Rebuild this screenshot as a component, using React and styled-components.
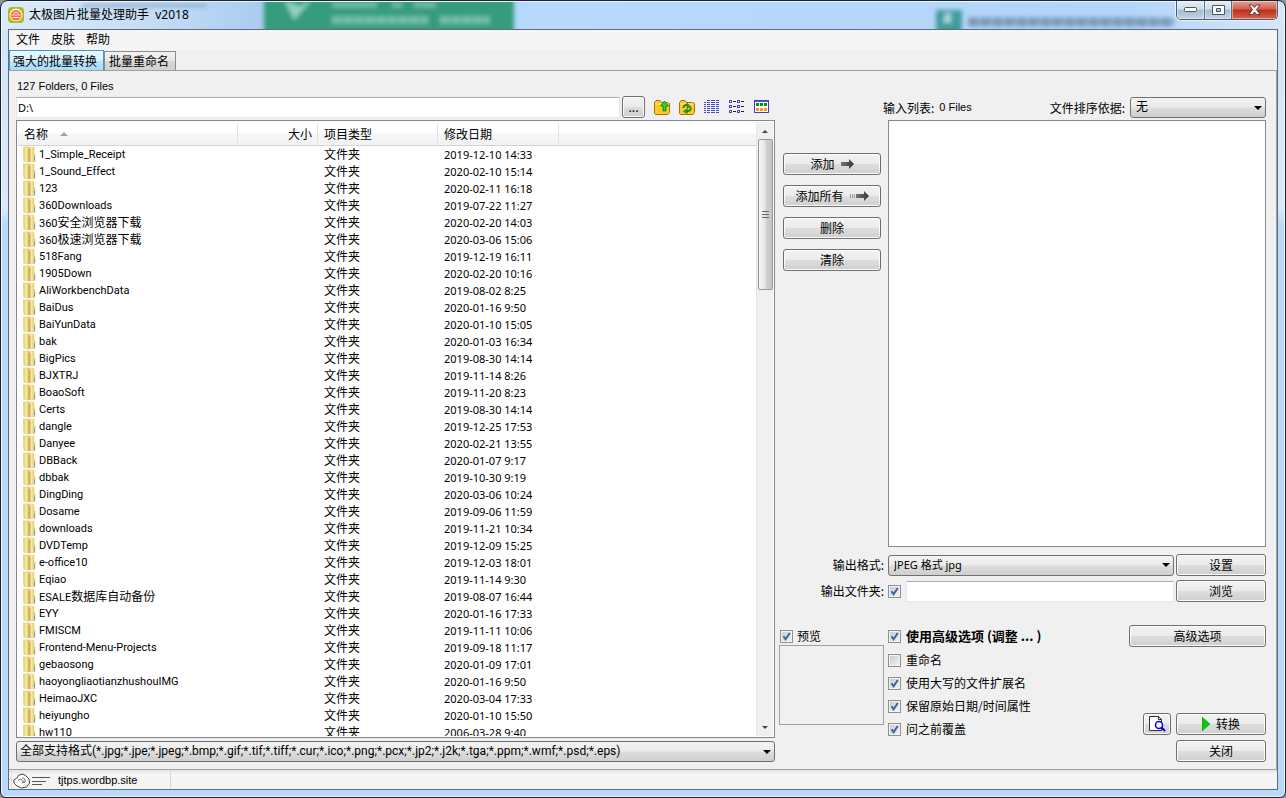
import React from "react";
import styled, { createGlobalStyle, css } from "styled-components";

const LATIN = '"Noto Sans", "Noto Sans CJK SC", sans-serif';
const NARROW = 'Roboto, "Noto Sans CJK SC", sans-serif';
const ARIAL = '"Liberation Sans", "Noto Sans CJK SC", sans-serif';
const HAN = '"Noto Sans CJK SC", sans-serif';

const GlobalStyle = createGlobalStyle`
  * { box-sizing: border-box; }
  body { margin: 0; background: #8d9297; color: #000; }
  button, input, select { margin: 0; color: inherit; }
`;

const Frame = styled.div`
  position: relative;
  display: flex;
  flex-direction: column;
  height: 100vh;
  min-height: 560px;
  padding: 0 7px 7px;
  overflow: hidden;
  background: linear-gradient(#cfe3f7, #dbeafa 26%, #b9d9fb 28%, #b9d9fb);
  border: 1px solid #1b2230;
  border-radius: 8px 8px 6px 6px;
  box-shadow: inset 0 0 0 1px #eef7ff;
`;

const Glass = styled.svg`
  position: absolute;
  inset: 1px;
  width: calc(100% - 2px);
  height: 28px;
`;

const TitleBar = styled.header`
  position: relative;
  display: flex;
  align-items: flex-start;
  height: 28px;
  flex: none;
`;

const Title = styled.h1`
  display: flex;
  align-items: center;
  gap: 5px;
  flex: 1;
  height: 28px;
  margin: 0;
  font: 400 12px/16px ${LATIN};
  white-space: pre;
`;

const Captions = styled.div`
  display: flex;
  height: 19px;
  border: 1px solid #4b5a6c;
  border-top: 0;
  border-radius: 0 0 5px 5px;
  overflow: hidden;
  box-shadow: 0 0 0 1px #e8f3fd;
`;

const Caption = styled.button`
  display: grid;
  place-items: center;
  width: ${(p) => (p.$close ? 46 : 27)}px;
  height: 18px;
  padding: 0;
  border: 0;
  border-left: ${(p) => (p.$first ? "0" : "1px solid #5c6b7d")};
  background: ${(p) =>
    p.$close
      ? "linear-gradient(#e3a396, #d0604b 45%, #bb2e17 50%, #d4654b)"
      : "linear-gradient(#e6eef7, #cddcea 45%, #a6bbd0 50%, #c2d5e8)"};
  box-shadow: inset 0 0 0 1px rgba(255, 255, 255, 0.45);
`;

const Client = styled.div`
  position: relative;
  display: flex;
  flex-direction: column;
  flex: 1;
  min-height: 0;
  background: #f0f0f0;
  border: 1px solid #5f6c7b;
`;

const Menu = styled.nav`
  display: flex;
  align-items: flex-start;
  gap: 11px;
  flex: none;
  height: 20px;
  padding-left: 7px;
  background: #f5f5f5;
`;

const MenuItem = styled.button`
  padding: 0;
  border: 0;
  background: none;
  font: 12px/18px ${HAN};
`;

const Tabs = styled.div`
  display: flex;
  align-items: flex-end;
  flex: none;
  height: 21px;
  border-bottom: 1px solid #a0a0a0;
`;

const Tab = styled.button`
  height: ${(p) => (p.$active ? 20 : 19)}px;
  padding: 0 6px 0 4px;
  font: 12px/16px ${HAN};
  border: 1px solid #8c8c8c;
  border-bottom: 0;
  background: linear-gradient(#f2f2f2, #e6e6e6 50%, #d6d6d6 52%, #d2d2d2);
  ${(p) =>
    p.$active &&
    css`
      padding: 0 6px 0 3px;
      border-color: #3c9dc9;
      background: linear-gradient(#eaf6fd, #d7effc 50%, #bde6fd 52%, #a8dbf8);
    `}
`;

const Panel = styled.main`
  display: grid;
  grid-template-columns: minmax(0, 759fr) minmax(0, 487fr);
  column-gap: 4px;
  flex: 1;
  min-height: 0;
  padding: 8px 10px 7px 7px;
  border-right: 1px solid #a0a0a0;
  border-bottom: 1px solid #a0a0a0;
`;

const Browser = styled.section`
  display: flex;
  flex-direction: column;
  min-width: 0;
  min-height: 0;
`;

const Summary = styled.p`
  margin: 0 0 1px 1px;
  font: 11px/15px ${ARIAL};
`;

const PathRow = styled.div`
  display: flex;
  align-items: center;
  gap: 2px;
  height: 24px;
  margin-bottom: 1px;
  flex: none;
`;

const TextBox = styled.input`
  flex: 1;
  min-width: 0;
  height: 21px;
  padding: 0 1px;
  font: 11px/15px ${LATIN};
  background: #fff;
  border: 1px solid #e3e9ef;
  border-top-color: #abadb3;
  border-radius: 1px;
`;

const Button = styled.button`
  display: flex;
  align-items: center;
  justify-content: center;
  gap: 6px;
  width: ${(p) => (p.$width ? p.$width + "px" : "auto")};
  height: 22px;
  padding: 0;
  font: 12px/18px ${HAN};
  background: linear-gradient(#f2f2f2, #ebebeb 48%, #dddddd 52%, #cfcfcf);
  border: 1px solid #707070;
  border-radius: 3px;
  box-shadow: inset 0 0 0 1px #fbfbfb;
`;

const Tools = styled.div`
  display: flex;
  gap: 9px;
  padding: 0 5px 0 7px;
`;

const Tool = styled.button`
  display: grid;
  width: 16px;
  height: 16px;
  padding: 0;
  border: 0;
  background: none;
`;

const ListBox = styled.div`
  display: flex;
  flex: 1;
  min-height: 0;
  margin-bottom: 3px;
  padding: 1px;
  background: #fff;
  border: 1px solid #828790;
`;

const Scroller = styled.div`
  flex: 1;
  min-width: 0;
  padding: 1px 0;
  overflow: hidden;
`;

const Files = styled.table`
  width: 100%;
  table-layout: fixed;
  border-collapse: separate;
  border-spacing: 0;
  font: 11px/17px ${LATIN};
`;

const Head = styled.th`
  width: ${(p) => (p.$width ? p.$width + "px" : "auto")};
  height: 23px;
  padding: 0 5px 0 6px;
  text-align: ${(p) => (p.$right ? "right" : "left")};
  font: 12px/18px ${HAN};
  white-space: nowrap;
  background: linear-gradient(#fff 45%, #f5f6f8 50%, #f1f2f4);
  border-right: ${(p) => (p.$width ? "1px solid #e0e2e5" : "0")};
  border-bottom: 1px solid #d5d5d5;
`;

const SortMark = styled.i`
  display: inline-block;
  margin-left: 12px;
  vertical-align: 3px;
  border: 4px solid transparent;
  border-top: 0;
  border-bottom-color: #a3a3a3;
`;

const Cell = styled.td`
  height: 17px;
  padding: 0 5px 0 6px;
  white-space: nowrap;
`;

const NameCell = styled(Cell)`
  padding-left: 5px;
  font-family: ${NARROW};
`;

const Name = styled.span`
  display: flex;
  align-items: center;
  gap: 3px;
  height: 17px;
`;

const Han = styled.span`
  font: 12px/16px ${HAN};
`;

const ScrollBar = styled.div`
  display: flex;
  flex-direction: column;
  align-items: center;
  width: 17px;
  background: #f0f0f0;
  border-left: 1px solid #e6e6e6;
`;

const ScrollArrow = styled.button`
  display: grid;
  place-items: center;
  width: 16px;
  height: 17px;
  padding: 0;
  border: 0;
  background: none;
`;

const Track = styled.div`
  flex: 1;
  width: 15px;
`;

const Thumb = styled.div`
  display: grid;
  place-content: center;
  gap: 2px;
  width: 15px;
  height: 26%;
  min-height: 24px;
  background: linear-gradient(90deg, #f5f5f5, #e6e6e7 48%, #d2d2d4 52%, #c4c4c8);
  border: 1px solid #979797;
  border-radius: 2px;
`;

const Grip = styled.i`
  width: 7px;
  height: 1px;
  background: #666;
`;

const SelectWrap = styled.span`
  display: grid;
  align-items: center;
  width: ${(p) => (p.$width ? p.$width + "px" : "auto")};
  flex: ${(p) => (p.$grow ? 1 : "none")};
  min-width: 0;
  & > * { grid-area: 1 / 1; }
  & > svg { justify-self: end; margin-right: 4px; pointer-events: none; }
`;

const SelectBox = styled.select`
  appearance: none;
  width: 100%;
  height: 21px;
  padding: 0 14px 1px ${(p) => p.$inset || 3}px;
  font: ${(p) => p.$size || 11}px/16px ${(p) => (p.$narrow ? NARROW : LATIN)};
  background: linear-gradient(#f3f3f3, #ebebeb 48%, #dddddd 52%, #cfcfcf);
  border: 1px solid #707070;
  border-radius: 3px;
`;

const Work = styled.section`
  display: flex;
  flex-direction: column;
  min-width: 0;
  min-height: 0;
`;

const ListHeader = styled.div`
  display: flex;
  align-items: center;
  justify-content: space-between;
  flex: none;
  height: 23px;
  margin: 17px 0 1px;
  padding-left: 104px;
  font: 12px/18px ${HAN};
`;

const HeaderGroup = styled.span`
  display: flex;
  align-items: center;
  gap: 5px;
`;

const Small = styled.span`
  font: 11px/15px ${ARIAL};
`;

const Transfer = styled.div`
  display: grid;
  grid-template-columns: 98px minmax(0, 1fr);
  column-gap: 7px;
  flex: 1;
  min-height: 0;
  padding-left: 4px;
`;

const Actions = styled.div`
  display: flex;
  flex-direction: column;
  gap: 10px;
  padding-top: 33px;
`;

const InputList = styled.div`
  background: #fff;
  border: 1px solid #828790;
`;

const Output = styled.div`
  display: grid;
  grid-template-columns: 105px minmax(0, 1fr) 90px;
  gap: 4px 2px;
  flex: none;
  padding-top: 7px;
  font: 12px/18px ${HAN};
`;

const FieldLabel = styled.label`
  align-self: center;
  text-align: right;
`;

const Field = styled.div`
  display: flex;
  align-items: center;
  gap: 5px;
  padding-left: 2px;
`;

const Lower = styled.div`
  display: grid;
  grid-template-columns: 105px minmax(0, 1fr) 137px;
  column-gap: 4px;
  flex: none;
  padding-top: 23px;
`;

const PreviewBox = styled.div`
  height: 80px;
  border: 1px solid #a0a0a0;
`;

const Options = styled.div`
  display: flex;
  flex-direction: column;
  gap: 5px;
  padding: 1px 0 24px;
`;

const Check = styled.label`
  display: flex;
  align-items: center;
  gap: 5px;
  height: 18px;
  font: 12px/18px ${HAN};
  white-space: nowrap;
`;

const MainCheck = styled(Check)`
  height: 20px;
  font-size: 13px;
  font-weight: 700;
`;

const PreviewLabel = styled(Check)`
  gap: 4px;
  margin-top: 2px;
  padding-left: 1px;
`;

const BoxWrap = styled.span`
  display: grid;
  place-items: center;
  flex: none;
  & > * { grid-area: 1 / 1; }
  & > svg { pointer-events: none; visibility: hidden; }
  & > input:checked + svg { visibility: visible; }
`;

const Box = styled.input`
  appearance: none;
  width: 13px;
  height: 13px;
  border: 1px solid #8e8f8f;
  background: linear-gradient(135deg, #c3c8ce, #f6f6f6);
  box-shadow: inset 0 0 0 1px #f4f4f4;
`;

const Commands = styled.div`
  display: flex;
  flex-direction: column;
  justify-content: space-between;
`;

const Finish = styled.div`
  display: flex;
  flex-wrap: wrap;
  justify-content: flex-end;
  gap: 5px;
`;

const Status = styled.footer`
  display: flex;
  flex: none;
  height: 19px;
  background: linear-gradient(#e2e2e2, #f4f4f4 20%);
  padding-left: 2px;
`;

const StatusCell = styled.div`
  display: flex;
  align-items: center;
  gap: 7px;
  width: 160px;
  padding: 2px 0 0 1px;
  border-left: 1px solid #e4e4e4;
  border-right: 1px solid #d7d7d7;
`;

const Link = styled.a`
  font: 11px/15px ${ARIAL};
  color: #000;
  text-decoration: none;
`;

const FOLDERS = [
  ["1_Simple_Receipt", "2019-12-10 14:33"],
  ["1_Sound_Effect", "2020-02-10 15:14"],
  ["123", "2020-02-11 16:18"],
  ["360Downloads", "2019-07-22 11:27"],
  ["360安全浏览器下载", "2020-02-20 14:03"],
  ["360极速浏览器下载", "2020-03-06 15:06"],
  ["518Fang", "2019-12-19 16:11"],
  ["1905Down", "2020-02-20 10:16"],
  ["AliWorkbenchData", "2019-08-02 8:25"],
  ["BaiDus", "2020-01-16 9:50"],
  ["BaiYunData", "2020-01-10 15:05"],
  ["bak", "2020-01-03 16:34"],
  ["BigPics", "2019-08-30 14:14"],
  ["BJXTRJ", "2019-11-14 8:26"],
  ["BoaoSoft", "2019-11-20 8:23"],
  ["Certs", "2019-08-30 14:14"],
  ["dangle", "2019-12-25 17:53"],
  ["Danyee", "2020-02-21 13:55"],
  ["DBBack", "2020-01-07 9:17"],
  ["dbbak", "2019-10-30 9:19"],
  ["DingDing", "2020-03-06 10:24"],
  ["Dosame", "2019-09-06 11:59"],
  ["downloads", "2019-11-21 10:34"],
  ["DVDTemp", "2019-12-09 15:25"],
  ["e-office10", "2019-12-03 18:01"],
  ["Eqiao", "2019-11-14 9:30"],
  ["ESALE数据库自动备份", "2019-08-07 16:44"],
  ["EYY", "2020-01-16 17:33"],
  ["FMISCM", "2019-11-11 10:06"],
  ["Frontend-Menu-Projects", "2019-09-18 11:17"],
  ["gebaosong", "2020-01-09 17:01"],
  ["haoyongliaotianzhushouIMG", "2020-01-16 9:50"],
  ["HeimaoJXC", "2020-03-04 17:33"],
  ["heiyungho", "2020-01-10 15:50"],
  ["hw110", "2006-03-28 9:40"],
];

const FILTER =
  "全部支持格式(*.jpg;*.jpe;*.jpeg;*.bmp;*.gif;*.tif;*.tiff;*.cur;*.ico;*.png;*.pcx;*.jp2;*.j2k;*.tga;*.ppm;*.wmf;*.psd;*.eps)";

function Mixed({ text }) {
  const runs = text.match(/[\u4e00-\u9fff]+|[^\u4e00-\u9fff]+/g) || [];
  return (
    <span>
      {runs.map((run, i) => (/[\u4e00-\u9fff]/.test(run) ? <Han key={i}>{run}</Han> : run))}
    </span>
  );
}

function FolderIcon() {
  return (
    <svg width="13" height="17" viewBox="0 0 13 17">
      <defs>
        <linearGradient id="fold" x1="0" x2="1">
          <stop offset="0" stopColor="#dfc667" />
          <stop offset=".45" stopColor="#f8eeb0" />
          <stop offset="1" stopColor="#e0c25e" />
        </linearGradient>
      </defs>
      <path d="M5 1.200h6v6l1 1v7.500H5z" fill="url(#fold)" stroke="#dcc067" strokeWidth=".5" />
      <path d="M.5 1 4.500.700 6 1.800V16L.8 15.300z" fill="url(#fold)" stroke="#dcc067" strokeWidth=".5" />
      <path d="M5.500 2 7.500 3.200v12l-2 .8z" fill="#d0b053" />
      <path d="M11.500 10.500v4" stroke="#54a9dc" />
    </svg>
  );
}

function Arrow({ dashed }) {
  return (
    <svg width={dashed ? 19 : 13} height="12" viewBox={dashed ? "-6 0 19 12" : "0 0 13 12"}>
      <defs>
        <linearGradient id="arrow" x1="0" x2="1">
          <stop offset="0" stopColor="#777" />
          <stop offset="1" stopColor="#333" />
        </linearGradient>
      </defs>
      {dashed && <path d="M-6 4h1v4h-1zM-4 4h1v4h-1zM-2 4h1v4h-1z" fill="#999" />}
      <path d="M0 4h8V1l5 5-5 5V8H0z" fill="url(#arrow)" />
    </svg>
  );
}

function Drop({ up, small }) {
  return (
    <svg width="8" height="4" viewBox="0 0 8 4">
      <path d={up ? "M1 4h6L4 1z" : small ? "M1 0h6L4 3z" : "M0 0h8L4 4z"} fill={small || up ? "#444" : "#000"} />
    </svg>
  );
}

function Select({ label, value, id, $width, $grow, $inset, $size, $narrow }) {
  return (
    <SelectWrap $width={$width} $grow={$grow}>
      <SelectBox id={id} aria-label={label} $inset={$inset} $size={$size} $narrow={$narrow}>
        <option>{value}</option>
      </SelectBox>
      <Drop />
    </SelectWrap>
  );
}

function TickBox({ checked, label }) {
  return (
    <BoxWrap>
      <Box type="checkbox" defaultChecked={checked} aria-label={label} />
      <svg width="13" height="13" viewBox="0 0 13 13">
        <path d="M3.500 6.200 5.600 9.300 9.800 3" fill="none" stroke="#3b6699" strokeWidth="2" />
      </svg>
    </BoxWrap>
  );
}

function FolderBase({ children }) {
  return (
    <svg width="16" height="16" viewBox="0 0 16 16">
      <path d="M.5 3.500 2 1.500h4l1.500 2h6l2 1v9l-1.500 2H2l-1.500-1z" fill="#fcc832" stroke="#a87500" />
      <path d="M1.500 5h13" stroke="#ffe98c" />
      {children}
    </svg>
  );
}

function DetailsIcon() {
  return (
    <svg width="16" height="16" viewBox="0 0 16 16" shapeRendering="crispEdges">
      <g fill="#4646d0">
        <path d="M3 1h3v1H3zM7 1h4v1H7zM12 1h3v1h-3z" />
        {[3, 5, 7, 9, 11, 13].map((y) => (
          <path key={y} d={`M0 ${y}h2v1H0zM3 ${y}h3v1H3zM7 ${y}h4v1H7zM12 ${y}h3v1h-3z`} />
        ))}
      </g>
    </svg>
  );
}

function ListIcon() {
  return (
    <svg width="16" height="16" viewBox="0 0 16 16" shapeRendering="crispEdges">
      {[1, 6, 11].map((y) => (
        <g key={y} fill="none">
          <path d={`M.5 ${y + 0.5}h2v2h-2zM8.500 ${y + 0.5}h2v2h-2z`} stroke="#4a4acb" />
          <path d={`M4 ${y + 1.5}h3M12 ${y + 1.5}h3`} stroke="#222" />
        </g>
      ))}
    </svg>
  );
}

function ThumbsIcon() {
  return (
    <svg width="16" height="16" viewBox="0 0 16 16" shapeRendering="crispEdges">
      <path d="M.5 1.500h14v12H.5z" fill="#fff" stroke="#3d3dcc" />
      <path d="M1 2.500h13" stroke="#5959dd" />
      <path d="M2 4h3v3H2zM6 4h3v3H6zM10 4h3v3h-3z" fill="#089408" />
      <path d="M2 9h3v3H2zM6 9h3v3H6zM10 9h3v3h-3z" fill="#ff9326" />
    </svg>
  );
}

function AppIcon() {
  return (
    <svg width="16" height="16" viewBox="0 0 16 16">
      <rect width="16" height="16" rx="4" fill="#a9bd1c" />
      <circle cx="8" cy="8" r="6.500" fill="#fff3dc" />
      <circle cx="8" cy="8.200" r="5.300" fill="#f2704c" />
      <path d="M3.500 8h9M4.500 10.500h7" stroke="#ffe9d6" fill="none" />
      <path d="M5 6.500q3-3 6 0" stroke="#ffe9d6" fill="none" />
    </svg>
  );
}

function CloudIcon() {
  return (
    <svg width="38" height="16" viewBox="0 0 38 16" fill="none" stroke="#444">
      <path d="M4 13 1 10 .8 7 4 5l2-3 4-1 3 2 3 3 .5 4-3 4-5 1z" fill="#fff" />
      <path d="M5 7.500q2-2.500 4-.5M9 5q4 0 3 4l-3 1M10 7v2" strokeWidth=".8" />
      <path d="M19 4.500h18M19 8.500h14M19 11.500h10" stroke="#555" />
    </svg>
  );
}

function TitleGlass() {
  return (
    <Glass aria-hidden="true">
      <defs>
        <filter id="soft" x="-20%" y="-50%" width="140%" height="200%">
          <feGaussianBlur stdDeviation="2" />
        </filter>
        <linearGradient id="sky" x1="0" x2="1">
          <stop offset="0" stopColor="#dcebfa" />
          <stop offset=".12" stopColor="#c3dcf6" />
          <stop offset=".2" stopColor="#aacdf0" />
          <stop offset=".42" stopColor="#b7d9fd" />
          <stop offset=".88" stopColor="#b3d5f8" />
          <stop offset="1" stopColor="#d5e7f9" />
        </linearGradient>
      </defs>
      <rect width="100%" height="28" fill="url(#sky)" />
      <g filter="url(#soft)">
        <rect x="80" y="1" width="125" height="5" fill="#8ba6c3" opacity=".6" />
        <rect x="262" y="-5" width="250" height="40" fill="#369c7e" />
        <path d="m282 -2 10 20 18-20-12 6z" fill="#8fd0bd" />
        <path d="M330 3h45M390 3h10M412 3h22" stroke="#74bea8" strokeWidth="5" />
        <path d="M330 18h96M438 18h50" stroke="#74bea8" strokeWidth="8" strokeDasharray="10 1" />
        <rect x="934" y="8" width="26" height="26" fill="#3f9c9c" />
        <path d="M943 11h6v10h-8z" fill="#a7d3da" />
        <path d="M966 20h206" stroke="#7c9abb" strokeWidth="9" strokeDasharray="11 1" />
      </g>
    </Glass>
  );
}

export default function App() {
  return (
    <>
      <GlobalStyle />
      <Frame>
        <TitleGlass />
        <TitleBar>
          <Title>
            <AppIcon />
            <span>太极图片批量处理助手  v2018</span>
          </Title>
          <Captions>
            <Caption $first aria-label="最小化">
              <svg width="13" height="6"><rect x=".5" y=".5" width="12" height="4" rx="1" fill="#fff" stroke="#4a5564" /></svg>
            </Caption>
            <Caption aria-label="最大化">
              <svg width="13" height="11"><path d="M.5.500h12v9H.5zM4.500 3.500v3h4v-3z" fill="#fff" fillRule="evenodd" stroke="#4a5564" /></svg>
            </Caption>
            <Caption $close aria-label="关闭窗口">
              <svg width="13" height="12" viewBox="0 0 13 12"><path d="M1 1h3.500l2 2.500 2-2.500H12L8.500 5.500 12 10.500H8.500l-2-2.500-2 2.500H1l3.500-5z" fill="#fff" stroke="#5a3a3e" /></svg>
            </Caption>
          </Captions>
        </TitleBar>
        <Client>
          <Menu>
            <MenuItem>文件</MenuItem>
            <MenuItem>皮肤</MenuItem>
            <MenuItem>帮助</MenuItem>
          </Menu>
          <Tabs role="tablist">
            <Tab role="tab" aria-selected="true" $active>强大的批量转换</Tab>
            <Tab role="tab" aria-selected="false">批量重命名</Tab>
          </Tabs>
          <Panel>
            <Browser>
              <Summary>127 Folders, 0 Files</Summary>
              <PathRow>
                <TextBox aria-label="路径" defaultValue="D:\" />
                <Button $width={23} aria-label="浏览路径">...</Button>
                <Tools>
                  <Tool aria-label="上一级">
                    <FolderBase><path d="M9 12V7H6.500L10.500 2 14.500 7H12v5z" fill="#2bd62b" stroke="#0b7d0b" strokeWidth=".8" /></FolderBase>
                  </Tool>
                  <Tool aria-label="刷新">
                    <FolderBase>
                      <path d="M4.500 9q0-3.500 4-3M11.800 8.500q0 4-4 3.500" fill="none" stroke="#0f8a0f" strokeWidth="1.800" />
                      <path d="M8 4v5l4-1zM8.300 9.500v5l-4-2z" fill="#1fae1f" stroke="#0a700a" strokeWidth=".5" />
                    </FolderBase>
                  </Tool>
                  <Tool aria-label="详细信息"><DetailsIcon /></Tool>
                  <Tool aria-label="列表"><ListIcon /></Tool>
                  <Tool aria-label="缩略图"><ThumbsIcon /></Tool>
                </Tools>
              </PathRow>
              <ListBox>
                <Scroller>
                  <Files>
                    <thead>
                      <tr>
                        <Head $width={220}>名称<SortMark /></Head>
                        <Head $width={80} $right>大小</Head>
                        <Head $width={120}>项目类型</Head>
                        <Head $width={121}>修改日期</Head>
                        <Head aria-label="空" />
                      </tr>
                    </thead>
                    <tbody>
                      {FOLDERS.map(([name, date]) => (
                        <tr key={name}>
                          <NameCell><Name><FolderIcon /><Mixed text={name} /></Name></NameCell>
                          <Cell />
                          <Cell><Han>文件夹</Han></Cell>
                          <Cell>{date}</Cell>
                          <Cell />
                        </tr>
                      ))}
                    </tbody>
                  </Files>
                </Scroller>
                <ScrollBar>
                  <ScrollArrow aria-label="向上滚动"><Drop up /></ScrollArrow>
                  <Track><Thumb><Grip /><Grip /><Grip /></Thumb></Track>
                  <ScrollArrow aria-label="向下滚动"><Drop small /></ScrollArrow>
                </ScrollBar>
              </ListBox>
              <Select label="文件类型" value={FILTER} $size={12} $narrow />
            </Browser>
            <Work>
              <ListHeader>
                <HeaderGroup>输入列表: <Small>0 Files</Small></HeaderGroup>
                <HeaderGroup>
                  <label htmlFor="sort">文件排序依据:</label>
                  <Select id="sort" value="无" $width={136} $inset={5} $size={12} />
                </HeaderGroup>
              </ListHeader>
              <Transfer>
                <Actions>
                  <Button>添加<Arrow /></Button>
                  <Button>添加所有<Arrow dashed /></Button>
                  <Button>删除</Button>
                  <Button>清除</Button>
                </Actions>
                <InputList />
              </Transfer>
              <Output>
                <FieldLabel htmlFor="format">输出格式:</FieldLabel>
                <Field><Select id="format" value="JPEG 格式 jpg" $grow $inset={5} /></Field>
                <Button>设置</Button>
                <FieldLabel htmlFor="folder">输出文件夹:</FieldLabel>
                <Field>
                  <TickBox checked label="使用输出文件夹" />
                  <TextBox id="folder" />
                </Field>
                <Button>浏览</Button>
              </Output>
              <Lower>
                <div>
                  <PreviewLabel><TickBox checked />预览</PreviewLabel>
                  <PreviewBox />
                </div>
                <Options>
                  <MainCheck><TickBox checked />使用高级选项 (调整 ... )</MainCheck>
                  <Check><TickBox />重命名</Check>
                  <Check><TickBox checked />使用大写的文件扩展名</Check>
                  <Check><TickBox checked />保留原始日期/时间属性</Check>
                  <Check><TickBox checked />问之前覆盖</Check>
                </Options>
                <Commands>
                  <Button>高级选项</Button>
                  <Finish>
                    <Button $width={28} aria-label="预览结果">
                      <svg width="17" height="16" viewBox="0 0 17 16" fill="none">
                        <path d="M.5.500h9l3 3v11H.5z" fill="#fff" stroke="#333" />
                        <path d="M9.500.500v3h3" stroke="#333" />
                        <circle cx="10" cy="9" r="3.500" fill="#fff" stroke="#0000e6" strokeWidth="1.500" />
                        <path d="m12.500 11.500 3.500 3.500" stroke="#0000e6" strokeWidth="2" />
                      </svg>
                    </Button>
                    <Button $width={90}>
                      <svg width="8" height="14"><path d="M0 0 8 7 0 14z" fill="#11c411" stroke="#0a8a0a" strokeWidth=".5" /></svg>
                      转换
                    </Button>
                    <Button $width={90}>关闭</Button>
                  </Finish>
                </Commands>
              </Lower>
            </Work>
          </Panel>
          <Status>
            <StatusCell>
              <CloudIcon />
              <Link href="#site">tjtps.wordbp.site</Link>
            </StatusCell>
          </Status>
        </Client>
      </Frame>
    </>
  );
}
